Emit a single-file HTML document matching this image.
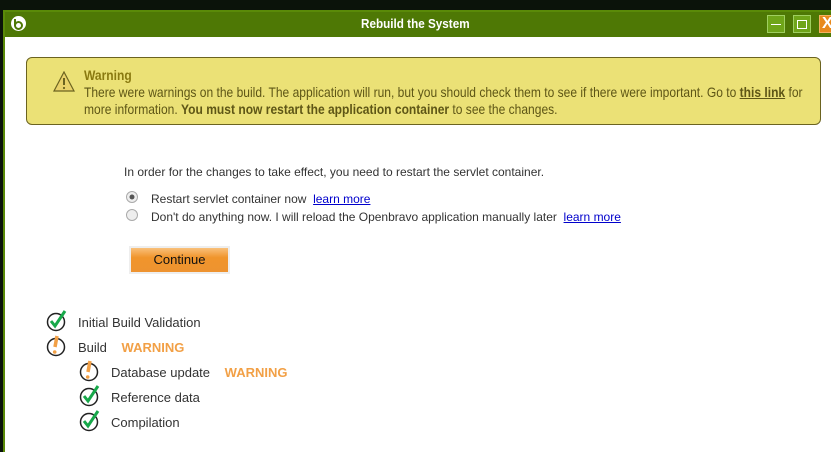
<!DOCTYPE html>
<html><head><style>
body{margin:0;width:831px;height:433px;overflow:hidden;background:#0b130a;font-family:"Liberation Sans",sans-serif;position:relative}
.win{position:absolute;left:3px;top:10px;width:840px;height:440px;background:#fff;border-left:2px solid #5a8a08;border-top:2px solid #5a8a08}
.title{position:absolute;left:0;top:0;right:0;height:25px;background:#4e7805;color:#fff;font-weight:bold;font-size:13px;text-align:center;line-height:24px;padding-right:20px}
.logo{position:absolute;left:6px;top:4px;width:15px;height:15px;border-radius:50%;background:#fff}
.btn{position:absolute;top:3px;width:18px;height:18px;box-sizing:border-box;border:1px solid #9fcf60;background:#6fa519}
.warn{position:absolute;left:26px;top:57px;width:795px;height:68px;box-sizing:border-box;background:#ebe176;border:1px solid #6b6320;border-radius:6px;font-size:14px;color:#5e5616;line-height:17px}
.sq{position:absolute;left:57px;top:9px;width:850px;transform:scaleX(0.86);transform-origin:0 0}
.t{position:absolute;font-size:12px;color:#333;white-space:nowrap}
a{color:#00c;text-decoration:underline}
.row{position:absolute;font-size:13px;color:#333;white-space:nowrap}
.w{color:#f2a046;font-weight:bold;margin-left:11px}
</style></head><body>
<div class="win">
 <div class="title"><span style="display:inline-block;transform:scaleX(0.9)">Rebuild the System</span>
  <div class="logo"><svg width="15" height="15"><circle cx="7.5" cy="8.5" r="3.5" fill="none" stroke="#4e7805" stroke-width="2"/><path d="M4 2v7" stroke="#4e7805" stroke-width="2"/></svg></div>
  <div class="btn" style="left:762px"><div style="position:absolute;left:3px;top:8px;width:10px;height:1px;background:#fff"></div></div>
  <div class="btn" style="left:788px"><div style="position:absolute;left:3px;top:4px;width:8px;height:7px;border:1px solid #fff"></div></div>
  <div class="btn" style="left:814px;background:#e8891c;border-color:#f5b060;color:#fff;font-size:16px;line-height:16px;text-align:left;padding-left:2px">X</div>
 </div>
</div>
<div class="warn">
 <svg style="position:absolute;left:26px;top:13px" width="22" height="22"><path d="M11 1L21 20H1Z" fill="#e9d26a" stroke="#6b6320" stroke-width="1.2"/><path d="M11 7v7" stroke="#6b6320" stroke-width="2"/><circle cx="11" cy="17" r="1.1" fill="#6b6320"/></svg>
 <div class="sq"><b style="color:#8a7a10">Warning</b><br>There were warnings on the build. The application will run, but you should check them to see if there were important. Go to <b style="text-decoration:underline">this link</b> for<br>more information. <b>You must now restart the application container</b> to see the changes.</div>
</div>
<div class="t" style="left:124px;top:165px">In order for the changes to take effect, you need to restart the servlet container.</div>
<svg style="position:absolute;left:126px;top:191px" width="12" height="12"><circle cx="6" cy="6" r="5.5" fill="#eee" stroke="#aaa"/><circle cx="6" cy="6" r="2.5" fill="#555"/></svg>
<div class="t" style="left:151px;top:192px">Restart servlet container now &nbsp;<a>learn more</a></div>
<svg style="position:absolute;left:126px;top:209px" width="12" height="12"><circle cx="6" cy="6" r="5.5" fill="#eee" stroke="#aaa"/></svg>
<div class="t" style="left:151px;top:210px">Don't do anything now. I will reload the Openbravo application manually later &nbsp;<a>learn more</a></div>
<div style="position:absolute;left:129px;top:246px;width:101px;height:28px;box-sizing:border-box;border:2px solid #eee;background:linear-gradient(#f9c07a,#f0952c 40%,#ee9330);font-size:13px;text-align:center;line-height:24px;color:#111">Continue</div>
<svg width="0" height="0" style="position:absolute"><defs>
<g id="ok"><circle cx="10" cy="12" r="8.5" fill="none" stroke="#222" stroke-width="1.5"/><path d="M5 11l4 5L19 1" fill="none" stroke="#17a84a" stroke-width="3"/></g>
<g id="wr"><circle cx="10" cy="12" r="8.5" fill="none" stroke="#222" stroke-width="1.5"/><path d="M11 1l-2 11" stroke="#f2a046" stroke-width="3.5"/><circle cx="8.7" cy="17" r="1.8" fill="#f2a046"/></g>
</defs></svg>
<svg style="position:absolute;left:46px;top:310px" width="22" height="22"><use href="#ok"/></svg>
<div class="row" style="left:78px;top:315px">Initial Build Validation</div>
<svg style="position:absolute;left:46px;top:335px" width="22" height="22"><use href="#wr"/></svg>
<div class="row" style="left:78px;top:340px">Build <span class="w">WARNING</span></div>
<svg style="position:absolute;left:79px;top:360px" width="22" height="22"><use href="#wr"/></svg>
<div class="row" style="left:111px;top:365px">Database update <span class="w">WARNING</span></div>
<svg style="position:absolute;left:79px;top:385px" width="22" height="22"><use href="#ok"/></svg>
<div class="row" style="left:111px;top:390px">Reference data</div>
<svg style="position:absolute;left:79px;top:410px" width="22" height="22"><use href="#ok"/></svg>
<div class="row" style="left:111px;top:415px">Compilation</div>
</body></html>
